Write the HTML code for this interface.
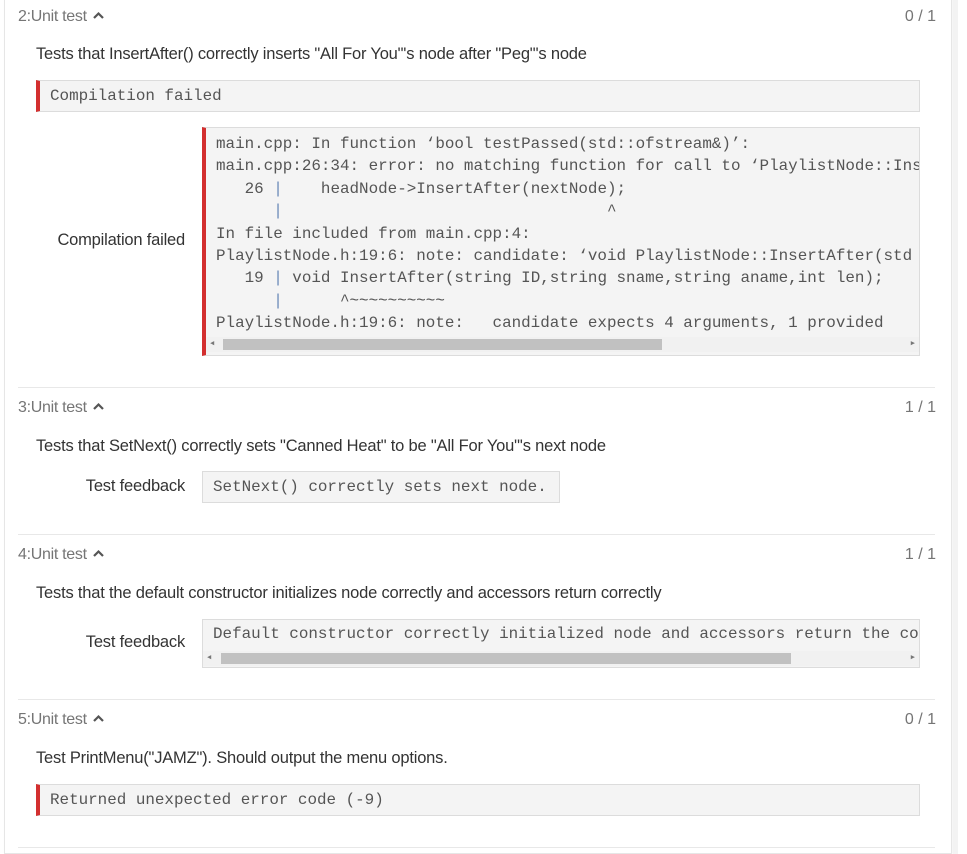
<!DOCTYPE html>
<html><head><style>
*{margin:0;padding:0;box-sizing:border-box}
html,body{width:967px;height:854px;overflow:hidden}
body{background:#fff;font-family:"Liberation Sans",sans-serif;position:relative}
.card{position:absolute;left:4px;top:-2px;width:948px;height:856px;border:1px solid #e6e6e6;border-top:none;box-shadow:1px 0 2px rgba(0,0,0,.06)}
.strip{position:absolute;left:953px;top:0;width:5px;height:854px;background:#f3f3f3}
.a{position:absolute;white-space:nowrap}
.hd{font-size:16px;color:#757575;letter-spacing:-.3px}
.hd svg{vertical-align:middle;margin-left:6px;margin-top:-3px}
.sc{font-size:16px;color:#757575;right:31px}
.ds{font-size:16.5px;color:#333;left:36px;letter-spacing:-.2px}
.lb{font-size:16.5px;color:#333;text-align:right;right:782px;letter-spacing:-.2px}
.box{position:absolute;background:#f4f4f4;border:1px solid #dcdcdc;font-family:"Liberation Mono",monospace;font-size:15.9px;color:#555;overflow:hidden;white-space:pre}
.red{border-left:4px solid #d32f2f}
.sep{position:absolute;left:18px;width:917px;height:1px;background:#e8e8e8}
.sb{position:absolute;height:15px;background:#f1f1f1;left:0;right:0}
.th{position:absolute;top:2px;height:11px;background:#c1c1c1}
.ar{position:absolute;top:4px;font-size:7px;color:#777;line-height:7px}
.bar{color:#6a8ab8}
</style></head><body>
<div class="card"></div><div class="strip"></div>

<div class="a hd" style="left:18px;top:8px">2:Unit test<svg width="11" height="8" viewBox="0 0 11 8"><path d="M1 7L5.5 2.5L10 7" stroke="#555" stroke-width="2.2" fill="none"/></svg></div>
<div class="a sc" style="top:8px">0 / 1</div>
<div class="a ds" style="top:45px">Tests that InsertAfter() correctly inserts "All For You"'s node after "Peg"'s node</div>
<div class="box red" style="left:36px;top:80px;width:884px;height:32px;padding:6px 0 0 10px">Compilation failed</div>
<div class="a lb" style="top:231px">Compilation failed</div>
<div class="box red" style="left:202px;top:127px;width:718px;height:229px;padding:5px 0 0 10px;line-height:22.4px">main.cpp: In function ‘bool testPassed(std::ofstream&amp;)’:
main.cpp:26:34: error: no matching function for call to ‘PlaylistNode::InsertAfter
   26 <span class="bar">|</span>    headNode-&gt;InsertAfter(nextNode);
      <span class="bar">|</span>                                  ^
In file included from main.cpp:4:
PlaylistNode.h:19:6: note: candidate: ‘void PlaylistNode::InsertAfter(std
   19 <span class="bar">|</span> void InsertAfter(string ID,string sname,string aname,int len);
      <span class="bar">|</span>      ^~~~~~~~~~~
PlaylistNode.h:19:6: note:   candidate expects 4 arguments, 1 provided
<div class="sb" style="top:209px"><div class="ar" style="left:4px">◀</div><div class="th" style="left:17px;width:439px"></div><div class="ar" style="right:4px">▶</div></div></div>
<div class="sep" style="top:387px"></div>

<div class="a hd" style="left:18px;top:399px">3:Unit test<svg width="11" height="8" viewBox="0 0 11 8"><path d="M1 7L5.5 2.5L10 7" stroke="#555" stroke-width="2.2" fill="none"/></svg></div>
<div class="a sc" style="top:399px">1 / 1</div>
<div class="a ds" style="top:437px">Tests that SetNext() correctly sets "Canned Heat" to be "All For You"'s next node</div>
<div class="a lb" style="top:477px">Test feedback</div>
<div class="box" style="left:202px;top:471px;width:358px;height:32px;padding:6px 0 0 10px">SetNext() correctly sets next node.</div>
<div class="sep" style="top:534px"></div>

<div class="a hd" style="left:18px;top:546px">4:Unit test<svg width="11" height="8" viewBox="0 0 11 8"><path d="M1 7L5.5 2.5L10 7" stroke="#555" stroke-width="2.2" fill="none"/></svg></div>
<div class="a sc" style="top:546px">1 / 1</div>
<div class="a ds" style="top:584px">Tests that the default constructor initializes node correctly and accessors return correctly</div>
<div class="a lb" style="top:633px">Test feedback</div>
<div class="box" style="left:202px;top:619px;width:718px;height:49px;padding:5px 0 0 10px">Default constructor correctly initialized node and accessors return the correct values
<div class="sb" style="top:31px"><div class="ar" style="left:4px">◀</div><div class="th" style="left:18px;width:570px"></div><div class="ar" style="right:4px">▶</div></div></div>
<div class="sep" style="top:699px"></div>

<div class="a hd" style="left:18px;top:711px">5:Unit test<svg width="11" height="8" viewBox="0 0 11 8"><path d="M1 7L5.5 2.5L10 7" stroke="#555" stroke-width="2.2" fill="none"/></svg></div>
<div class="a sc" style="top:711px">0 / 1</div>
<div class="a ds" style="top:749px">Test PrintMenu("JAMZ"). Should output the menu options.</div>
<div class="box red" style="left:36px;top:784px;width:884px;height:32px;padding:6px 0 0 10px">Returned unexpected error code (-9)</div>
<div class="sep" style="top:847px"></div>
</body></html>
